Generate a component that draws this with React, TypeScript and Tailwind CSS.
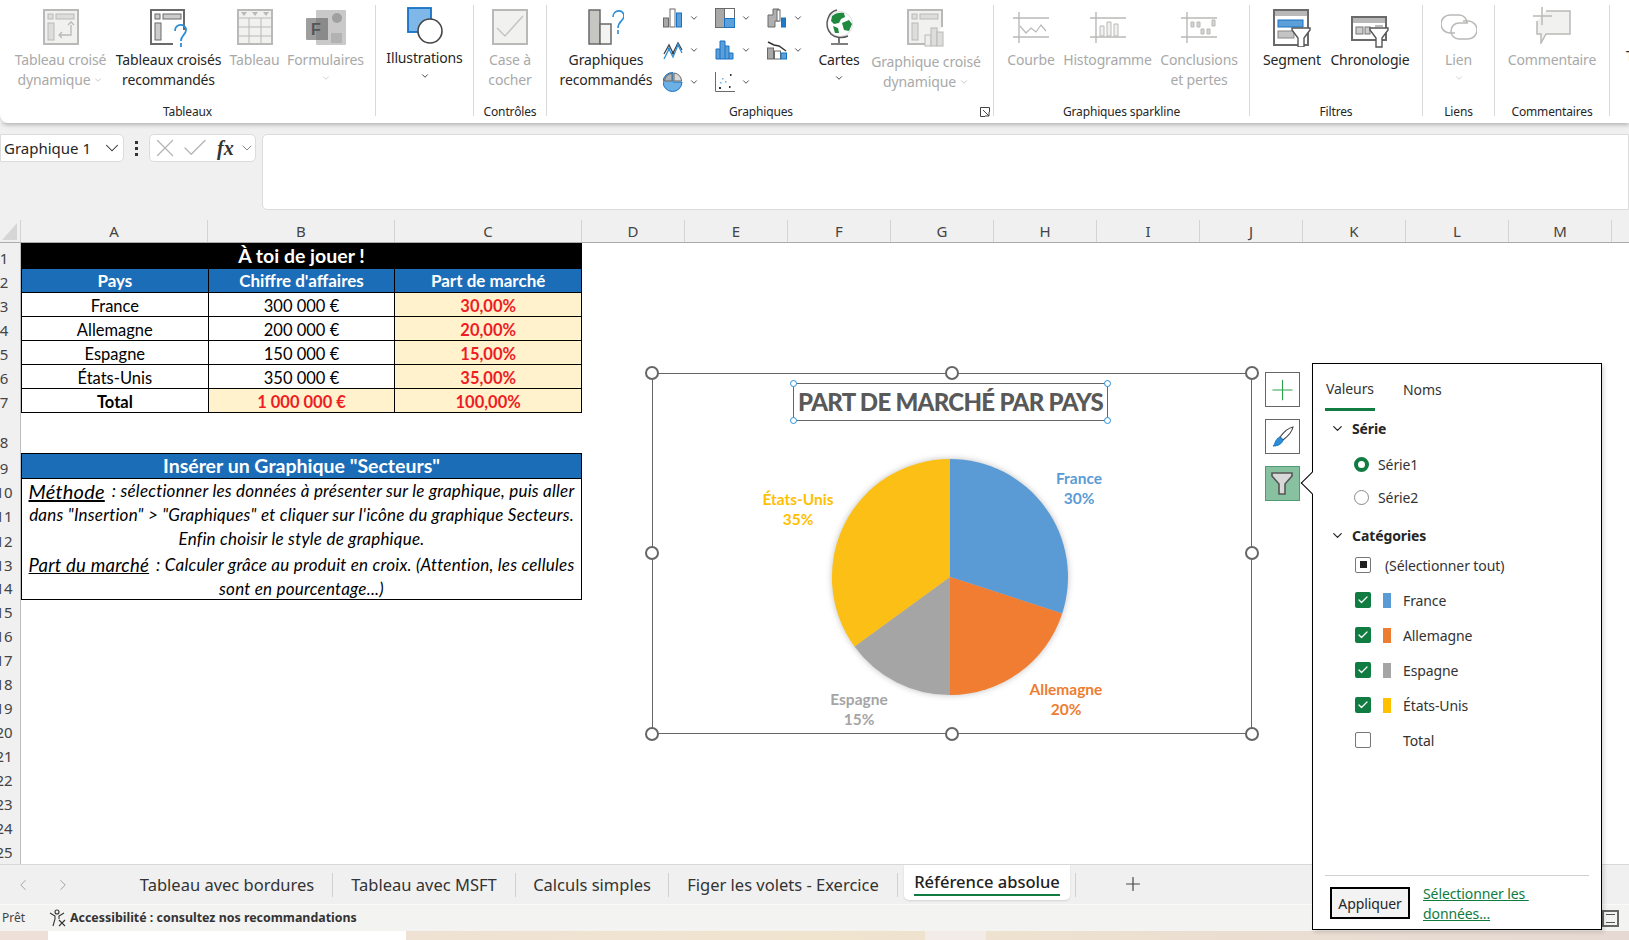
import type { ReactNode } from 'react';
import { Check, ChevronDown, ChevronLeft, ChevronRight, Plus, X } from 'lucide-react';

const ROW_HEIGHTS = [26, 24, 24, 24, 24, 24, 24, 40, 26, 24, 24, 25, 24, 23, 24, 24, 24, 24, 24, 24, 24, 24, 24, 24, 24];
const COLS = ['D', 'E', 'F', 'G', 'H', 'I', 'J', 'K', 'L', 'M'];

const GRAY = '#b9b9b7';
const LIGHT = '#f1f1f0';
const DARK = '#6a6a6a';

function Svg({ w, h, children }: { w: number; h: number; children: ReactNode }) {
  return (
    <svg width={w} height={h} viewBox={`0 0 ${w} ${h}`} fill="none" className="shrink-0">
      {children}
    </svg>
  );
}

function PivotIcon() {
  return (
    <Svg w={36} h={36}>
      <rect x="1" y="1" width="34" height="34" fill={LIGHT} stroke={GRAY} strokeWidth="2" />
      <rect x="5" y="5" width="5" height="5" fill="#ddd" stroke={GRAY} />
      <rect x="13" y="5" width="18" height="5" fill="#ddd" stroke={GRAY} />
      <rect x="5" y="14" width="6" height="17" fill="#ddd" stroke={GRAY} />
      <path d="M28 16v10H16m3-3-3 3 3 3m6-13 3-3 3 3" stroke={GRAY} strokeWidth="1.3" />
    </Svg>
  );
}

function RecoPivotIcon() {
  return (
    <Svg w={38} h={38}>
      <path d="M34 21V1H1v34h22" fill="#fff" stroke={DARK} strokeWidth="2" />
      <rect x="5" y="5" width="5" height="5" fill="#ccc" stroke={DARK} />
      <rect x="13" y="5" width="18" height="5" fill="#ccc" stroke={DARK} />
      <rect x="5" y="14" width="6" height="17" fill="#ccc" stroke={DARK} />
      <path d="M25 22c0-8 11-8 11-1 0 5-5 5-5 11" stroke="#2b8fd8" strokeWidth="1.8" />
      <path d="M31 34v4" stroke="#2b8fd8" strokeWidth="1.8" />
    </Svg>
  );
}

function TableIcon() {
  return (
    <Svg w={36} h={36}>
      <rect x="1" y="1" width="34" height="34" fill={LIGHT} stroke={GRAY} strokeWidth="2" />
      <path d="M1 9h34M1 18h34M1 27h34M12 9v26M24 9v26" stroke={GRAY} />
      <path d="M4 3h6l-3 4zM15 3h6l-3 4zM26 3h6l-3 4z" fill={GRAY} />
    </Svg>
  );
}

function FormsIcon() {
  return (
    <Svg w={40} h={36}>
      <rect x="10" y="1" width="30" height="35" rx="1" fill="#c9c9c9" />
      <circle cx="31" cy="9" r="5" fill="#a0a0a0" />
      <rect x="25" y="24" width="11" height="10" fill="#b2b2b2" />
      <rect x="0" y="9" width="22" height="22" rx="1" fill="#9e9e9e" />
      <rect x="10" y="9" width="12" height="22" fill="#8a8a8a" />
      <text x="5" y="26" fill="#555" fontSize="16" fontWeight="700" fontFamily="Liberation Sans, sans-serif">F</text>
    </Svg>
  );
}

function IllustrationsIcon() {
  return (
    <Svg w={36} h={37}>
      <rect x="1" y="1" width="23" height="24" fill="#7fb7e8" stroke="#1673c5" strokeWidth="1.8" />
      <circle cx="23" cy="24" r="12" fill="#fff" stroke="#444" strokeWidth="1.6" />
    </Svg>
  );
}

function CheckboxIcon() {
  return (
    <Svg w={36} h={36}>
      <rect x="1" y="1" width="34" height="34" fill={LIGHT} stroke={GRAY} strokeWidth="2" />
      <path d="M5 19l8 8L31 7" stroke="#c4c4c4" strokeWidth="1.5" />
    </Svg>
  );
}

function RecoChartIcon() {
  return (
    <Svg w={36} h={36}>
      <rect x="1" y="1" width="11" height="34" fill="#c6c6c2" stroke={DARK} strokeWidth="1.5" />
      <rect x="12" y="15" width="11" height="20" fill="#f3f3f1" stroke={DARK} strokeWidth="1.5" />
      <path d="M25 8c0-8 11-8 11-1 0 5-6 5-6 12" stroke="#2b8fd8" strokeWidth="1.6" />
      <path d="M30 21v4" stroke="#2b8fd8" strokeWidth="1.6" />
    </Svg>
  );
}

function BarsIcon() {
  return (
    <Svg w={20} h={20}>
      <rect x="0.5" y="10" width="5" height="9" fill="#a8a8a8" stroke={DARK} />
      <rect x="7" y="1" width="5" height="18" fill="#fff" stroke={DARK} />
      <rect x="13.5" y="5" width="5" height="14" fill="#5d9fd8" stroke="#1673c5" />
    </Svg>
  );
}

function LinesIcon() {
  return (
    <Svg w={20} h={20}>
      <path d="M1 14l5-9 4 8 5-10 4 7" stroke="#444" strokeWidth="1.3" />
      <path d="M1 19l5-10 4 8 5-12 4 8" stroke="#2b8fd8" strokeWidth="1.3" />
      <circle cx="6" cy="9" r="1.4" fill="#2b8fd8" />
      <circle cx="15" cy="5" r="1.4" fill="#2b8fd8" />
      <circle cx="10" cy="13" r="1.4" fill="#444" />
    </Svg>
  );
}

function PieIcon() {
  return (
    <Svg w={20} h={20}>
      <path d="M10 10h9a9.500 9.500 0 1 1-9-9.500V10z" fill="#6db0e6" stroke="#1673c5" />
      <path d="M9 1.500V9H1.500A7.800 7.800 0 0 1 9 1.500z" fill="#b0b0b0" stroke={DARK} />
      <path d="M11 1a8 8 0 0 1 7.500 8H11z" fill="#d8d8d8" stroke={DARK} />
    </Svg>
  );
}

function TreemapIcon() {
  return (
    <Svg w={20} h={20}>
      <rect x="0.5" y="0.5" width="9" height="19" fill="#a8a8a8" stroke={DARK} />
      <rect x="9.5" y="0.5" width="10" height="10" fill="#fff" stroke={DARK} />
      <rect x="9.5" y="10.5" width="10" height="9" fill="#5d9fd8" stroke="#1673c5" />
    </Svg>
  );
}

function HistoIcon() {
  return (
    <Svg w={20} h={20}>
      <path d="M1 19V9h4V1h5v5h4v7h4v6z" fill="#5d9fd8" stroke="#1673c5" />
      <path d="M5 9v10M10 6v13M14 13v6" stroke="#1673c5" />
    </Svg>
  );
}

function ScatterIcon() {
  return (
    <Svg w={20} h={20}>
      <path d="M0.5 0v19.5H20" stroke={DARK} />
      <path d="M15 2h1.5v2H15zM4 15h2v2H4zM14 14h1.500v2H14z" fill="#333" />
      <path d="M7 6h1.500v1.500H7zM10 9h1.500v1.500H10zM5 10h1.500v1.500H5z" fill="#6db0e6" />
    </Svg>
  );
}

function WaterfallIcon() {
  return (
    <Svg w={20} h={20}>
      <path d="M1 19V7h5V1h6v12h-4v6z" fill="#b0b0b0" stroke={DARK} />
      <rect x="10" y="2" width="3" height="11" fill="#fff" stroke={DARK} />
      <rect x="14.500" y="10" width="4" height="9" fill="#1f78c8" stroke="#1673c5" />
    </Svg>
  );
}

function ComboIcon() {
  return (
    <Svg w={20} h={20}>
      <rect x="0.500" y="8" width="6" height="11" fill="#a8a8a8" stroke={DARK} />
      <rect x="7.500" y="11" width="6" height="8" fill="#fff" stroke={DARK} />
      <rect x="14" y="13" width="5.500" height="6" fill="#5d9fd8" stroke="#1673c5" />
      <path d="M1 2l6 3 5 1 7 5" stroke="#333" strokeWidth="1.400" />
    </Svg>
  );
}

function GlobeIcon() {
  return (
    <Svg w={30} h={37}>
      <circle cx="16" cy="15" r="12.500" fill="#fff" stroke="#ddd" />
      <path d="M8 7c3-3 8-4 12-3l1 4-4 2-2 4-5 1-3-3z" fill="#1f8a3f" />
      <path d="M18 14l7-3 3 4-3 7-5-1z" fill="#1f8a3f" />
      <path d="M9 17l5 2 1 5-4 0z" fill="#1f8a3f" />
      <path d="M13 1C4 3-1 16 7 25c3 3 10 5 17 2" stroke="#555" strokeWidth="1.400" />
      <path d="M15 28v6M7 35h17" stroke="#555" strokeWidth="1.600" />
    </Svg>
  );
}

function PivotChartIcon() {
  return (
    <Svg w={38} h={38}>
      <path d="M22 35H1V1h34v17" fill={LIGHT} stroke={GRAY} strokeWidth="2" />
      <rect x="5" y="5" width="5" height="5" fill="#ddd" stroke={GRAY} />
      <rect x="13" y="5" width="18" height="5" fill="#ddd" stroke={GRAY} />
      <rect x="5" y="14" width="6" height="17" fill="#ddd" stroke={GRAY} />
      <rect x="18" y="26" width="6" height="11" fill="#eee" stroke={GRAY} />
      <rect x="24" y="19" width="6" height="18" fill="#ddd" stroke={GRAY} />
      <rect x="30" y="23" width="6" height="14" fill="#ddd" stroke={GRAY} />
    </Svg>
  );
}

function SparkIcon({ kind }: { kind: 'line' | 'bar' | 'win' }) {
  return (
    <Svg w={36} h={31}>
      <path d="M0 6h36M0 25h36M6 0v31" stroke={GRAY} strokeWidth="1.400" />
      {kind === 'line' && <path d="M7 14l6 7 5-5 5 4 5-7 5 6" stroke={GRAY} strokeWidth="1.200" />}
      {kind === 'bar' && <path d="M10 14h4v10h-4zM17 10h4v14h-4zM24 12h4v12h-4z" fill={LIGHT} stroke={GRAY} />}
      {kind === 'win' && <path d="M10 10h3v5h-3zM16 10h3v5h-3zM20 17h3v5h-3zM26 17h3v5h-3zM31 8h3v6h-3z" fill="#d4d4d4" stroke={GRAY} />}
    </Svg>
  );
}

function FunnelOverlay({ x, y }: { x: number; y: number }) {
  return <path transform={`translate(${x} ${y})`} d="M0 0h18v2l-6 8v9H6v-9L0 2z" fill="#fff" stroke="#555" strokeWidth="1.400" />;
}

function SlicerIcon() {
  return (
    <Svg w={38} h={38}>
      <rect x="1" y="1" width="34" height="35" fill="#fff" stroke={DARK} strokeWidth="2" />
      <rect x="2" y="2" width="32" height="5" fill="#b8b8b8" />
      <rect x="5" y="11" width="25" height="7" fill="#5d9fd8" stroke="#1673c5" />
      <rect x="5" y="22" width="16" height="7" fill="#c4c4c4" stroke="#888" />
      <FunnelOverlay x={19} y={19} />
    </Svg>
  );
}

function TimelineIcon() {
  return (
    <Svg w={38} h={32}>
      <rect x="1" y="1" width="34" height="23" fill="#fff" stroke={DARK} strokeWidth="2" />
      <rect x="2" y="2" width="32" height="5" fill="#b8b8b8" />
      <rect x="5" y="11" width="7" height="7" fill="#ccc" stroke="#777" />
      <rect x="14" y="11" width="5" height="7" fill="#ccc" stroke="#777" />
      <path d="M24 10h8" stroke="#777" />
      <FunnelOverlay x={19} y={12} />
    </Svg>
  );
}

function LinkIcon() {
  return (
    <Svg w={36} h={26}>
      <path d="M14 19H9A8.500 8.500 0 0 1 9 1h9c5 0 8 4 8 8" stroke={GRAY} strokeWidth="1.500" />
      <path d="M22 7h5a9 9 0 0 1 0 18h-9c-5 0-8-4-8-8 0-5 4-8 8-8h9" stroke={GRAY} strokeWidth="1.500" />
    </Svg>
  );
}

function CommentIcon() {
  return (
    <Svg w={38} h={37}>
      <path d="M13 4h24v23H13l-5 9v-9H4V14" fill={LIGHT} stroke={GRAY} strokeWidth="1.500" />
      <path d="M9 0v18M0 9h19" stroke={GRAY} strokeWidth="1.500" />
    </Svg>
  );
}

function FunnelIcon() {
  return (
    <svg width="22" height="23" viewBox="0 0 22 23" fill="none" className="mr-[2px]">
      <path d="M1 1h20v3l-7 8v10H8V12L1 4z" fill="#d8d8d8" stroke="#555" strokeWidth="1.600" />
    </svg>
  );
}

function BrushIcon() {
  return (
    <svg width="22" height="22" viewBox="0 0 22 22" fill="none">
      <path d="M21 1c-1 5-6 10-10 13l-3-3C11 7 16 2 21 1z" fill="#fff" stroke="#444" strokeWidth="1.100" />
      <path d="M8 11l3 3c-1 4-5 6-10 6 3-2 1-6 7-9z" fill="#2b8fd8" stroke="#1673c5" />
    </svg>
  );
}

function AccessibilityIcon() {
  return (
    <svg width="18" height="18" viewBox="0 0 18 18" fill="none" stroke="#333" strokeWidth="1.100">
      <circle cx="8" cy="3" r="2" />
      <path d="M1 4l5 3v3l-2 7M15 4l-5 3v3" />
      <path d="M10 11l6 6M16 11l-6 6" />
    </svg>
  );
}

function RibbonBtn({
  w,
  icon,
  lines,
  disabled,
  chev,
  slot = 'h-[45px] pt-[4px]',
}: {
  w: string;
  icon: ReactNode;
  lines: string[];
  disabled?: boolean;
  chev?: 'inline' | 'below';
  slot?: string;
}) {
  const color = disabled ? 'text-[#a9a9a9]' : 'text-[#262626]';
  return (
    <div className={`${w} flex flex-col items-center shrink-0 ${color}`}>
      <div className={`${slot} flex justify-center items-start`}>{icon}</div>
      {lines.map((line, i) => (
        <div key={line} className="flex items-center justify-center h-[20px] leading-[20px] whitespace-nowrap">
          {line}
          {chev === 'inline' && i === lines.length - 1 && <ChevronDown size={10} strokeWidth={1.500} className="ml-[3px]" />}
        </div>
      ))}
      {chev === 'below' && (
        <div className="h-[16px] flex items-center">
          <ChevronDown size={10} strokeWidth={disabled ? 1.300 : 2} />
        </div>
      )}
    </div>
  );
}

function Group({ w, label, children, className = '' }: { w: string; label?: string; children: ReactNode; className?: string }) {
  return (
    <div className={`${w} shrink-0 h-[111px] mt-[5px] border-r border-[#d9d9d9] flex flex-col`}>
      <div className={`h-[99px] shrink-0 flex ${className}`}>{children}</div>
      <div className="h-[16px] shrink-0 leading-[16px] text-center text-[12px] text-[#262626] whitespace-nowrap">{label}</div>
    </div>
  );
}

function SmallChart({ icon }: { icon: ReactNode }) {
  return (
    <div className="h-[26px] w-[52px] flex items-center pl-[3px] gap-[6px] text-[#333]">
      {icon}
      <ChevronDown size={10} strokeWidth={2} />
    </div>
  );
}

function Ribbon() {
  return (
    <div className="relative z-10 h-[123px] bg-white rounded-bl-lg shadow-[0_2px_4px_rgba(0,0,0,0.25)] flex text-[14px] tracking-[-0.15px] overflow-hidden">
      <Group w="w-[376px]" label="Tableaux" className="pl-[10px]">
        <RibbonBtn w="w-[101px]" icon={<PivotIcon />} lines={['Tableau croisé', 'dynamique']} disabled chev="inline" />
        <RibbonBtn w="w-[115px]" icon={<RecoPivotIcon />} lines={['Tableaux croisés', 'recommandés']} />
        <RibbonBtn w="w-[57px]" icon={<TableIcon />} lines={['Tableau']} disabled />
        <RibbonBtn w="w-[85px]" icon={<FormsIcon />} lines={['Formulaires']} disabled chev="below" />
      </Group>
      <Group w="w-[98px]">
        <RibbonBtn w="w-full" icon={<IllustrationsIcon />} lines={['Illustrations']} chev="below" slot="h-[43px] pt-[2px]" />
      </Group>
      <Group w="w-[73px]" label="Contrôles">
        <RibbonBtn w="w-full" icon={<CheckboxIcon />} lines={['Case à', 'cocher']} disabled />
      </Group>
      <div className="w-[447px] shrink-0 relative">
        <Group w="w-[447px]" className="pl-[13px]">
          <RibbonBtn w="w-[92px]" icon={<RecoChartIcon />} lines={['Graphiques', 'recommandés']} />
          <div className="ml-[8px] w-[156px] shrink-0 grid grid-cols-3 gap-y-[6px] content-start">
            <SmallChart icon={<BarsIcon />} />
            <SmallChart icon={<TreemapIcon />} />
            <SmallChart icon={<WaterfallIcon />} />
            <SmallChart icon={<LinesIcon />} />
            <SmallChart icon={<HistoIcon />} />
            <SmallChart icon={<ComboIcon />} />
            <SmallChart icon={<PieIcon />} />
            <SmallChart icon={<ScatterIcon />} />
          </div>
          <RibbonBtn w="w-[46px]" icon={<GlobeIcon />} lines={['Cartes']} chev="below" />
          <RibbonBtn w="w-[128px]" icon={<PivotChartIcon />} lines={['Graphique croisé', 'dynamique']} disabled chev="inline" slot="h-[47px] pt-[4px]" />
        </Group>
        <div className="absolute left-[182px] top-[103px] text-[12px] text-[#262626]">Graphiques</div>
        <svg className="absolute left-[433px] top-[107px]" width="10" height="10" viewBox="0 0 10 10" fill="none" stroke="#444">
          <path d="M9.500 5V0.500H0.500V9.500H5M3 3l6 6M9 5v4H5" />
        </svg>
      </div>
      <Group w="w-[256px]" label="Graphiques sparkline" className="pl-[7px]">
        <RibbonBtn w="w-[60px]" icon={<SparkIcon kind="line" />} lines={['Courbe']} disabled slot="h-[45px] pt-[7px]" />
        <RibbonBtn w="w-[93px]" icon={<SparkIcon kind="bar" />} lines={['Histogramme']} disabled slot="h-[45px] pt-[7px]" />
        <RibbonBtn w="w-[90px]" icon={<SparkIcon kind="win" />} lines={['Conclusions', 'et pertes']} disabled slot="h-[45px] pt-[7px]" />
      </Group>
      <Group w="w-[173px]" label="Filtres" className="pl-[11px]">
        <RibbonBtn w="w-[62px]" icon={<SlicerIcon />} lines={['Segment']} />
        <RibbonBtn w="w-[94px]" icon={<TimelineIcon />} lines={['Chronologie']} slot="h-[45px] pt-[11px]" />
      </Group>
      <Group w="w-[72px]" label="Liens">
        <RibbonBtn w="w-full" icon={<LinkIcon />} lines={['Lien']} disabled chev="below" slot="h-[45px] pt-[9px]" />
      </Group>
      <Group w="w-[115px]" label="Commentaires">
        <RibbonBtn w="w-full" icon={<CommentIcon />} lines={['Commentaire']} disabled slot="h-[45px] pt-[2px]" />
      </Group>
      <div className="pl-[16px] pt-[45px] text-[#262626]">T</div>
    </div>
  );
}

function FormulaBar() {
  return (
    <div className="h-[97px] bg-[#f0f0f0] flex items-start pt-[11px] font-['Noto_Sans',sans-serif]">
      <div className="w-[124px] h-[28px] bg-white border border-[#dcdcdc] rounded-r-[5px] flex items-center justify-between pl-[3px] text-[15px] text-[#262626]">
        Graphique 1
        <ChevronDown size={22} strokeWidth={1.100} />
      </div>
      <div className="w-[25px] h-[28px] flex flex-col items-center justify-center gap-[3px]">
        <span className="w-[3px] h-[3px] bg-[#333]" />
        <span className="w-[3px] h-[3px] bg-[#333]" />
        <span className="w-[3px] h-[3px] bg-[#333]" />
      </div>
      <div className="w-[107px] h-[28px] bg-white border border-[#dcdcdc] rounded-[5px] flex items-center text-[#b4b4b4]">
        <X size={30} strokeWidth={1} />
        <Check size={30} strokeWidth={1} />
        <span className="ml-[7px] mr-[5px] font-['Liberation_Serif',serif] italic font-bold text-[20px] text-[#333]">fx</span>
        <ChevronDown size={16} strokeWidth={1.300} className="text-[#777]" />
      </div>
      <div className="ml-[6px] flex-1 h-[76px] bg-white border border-[#dcdcdc] rounded-l-[5px]" />
    </div>
  );
}

function ColumnHeaders() {
  return (
    <div className="h-[23px] flex bg-[#f0f0f0] border-b border-[#ababab] text-[15px] text-[#444] font-['Noto_Sans',sans-serif]">
      <div className="w-[21px] shrink-0 border-r border-[#d4d4d4] pl-[2px] pt-[3px]">
        <svg width="15" height="17" viewBox="0 0 15 17"><path d="M15 0v17H0z" fill="#d6d6d6" /></svg>
      </div>
      {['A', 'B', 'C'].map((c) => (
        <div key={c} className="w-[187px] shrink-0 border-r border-[#d4d4d4] flex items-center justify-center">{c}</div>
      ))}
      {COLS.map((c) => (
        <div key={c} className="w-[103px] shrink-0 border-r border-[#d4d4d4] flex items-center justify-center">{c}</div>
      ))}
    </div>
  );
}

function RowHeaders() {
  return (
    <div className="w-[21px] shrink-0 bg-[#f0f0f0] border-r border-[#bdbdbd] overflow-hidden text-[15px] leading-[22px] text-[#444] font-['Noto_Sans',sans-serif]">
      {ROW_HEIGHTS.map((h, i) => (
        <div key={i} style={{ height: h }} className="w-[8px] flex items-end justify-center whitespace-nowrap">
          {i + 1}
        </div>
      ))}
    </div>
  );
}

const DATA = [
  ['France', '300 000 €', '30,00%'],
  ['Allemagne', '200 000 €', '20,00%'],
  ['Espagne', '150 000 €', '15,00%'],
  ['États-Unis', '350 000 €', '35,00%'],
];

function Cells() {
  const cell = 'flex items-center justify-center border-r border-b border-black';
  const row = 'grid grid-cols-3 grid-rows-[24px] h-[24px] border-l border-black';
  const cream = 'bg-[#fff2cc] text-[#ee1c25] font-bold pt-[2px]';
  return (
    <div className="w-[561px] shrink-0 text-[16.5px] leading-[20px] text-black font-['Lato',sans-serif]">
      <div className="h-[26px] bg-black text-white font-bold text-[19.5px] flex items-center justify-center">À toi de jouer !</div>
      <div className={`${row} bg-[#1c6db8] text-white font-bold text-[17px]`}>
        <div className={cell}>Pays</div>
        <div className={cell}>Chiffre d'affaires</div>
        <div className={cell}>Part de marché</div>
      </div>
      {DATA.map((d) => (
        <div key={d[0]} className={row}>
          <div className={`${cell} pt-[2px]`}>{d[0]}</div>
          <div className={`${cell} pt-[2px]`}>{d[1]}</div>
          <div className={`${cell} ${cream}`}>{d[2]}</div>
        </div>
      ))}
      <div className={row}>
        <div className={`${cell} font-bold pt-[2px]`}>Total</div>
        <div className={`${cell} ${cream}`}>1 000 000 €</div>
        <div className={`${cell} ${cream}`}>100,00%</div>
      </div>
      <div className="h-[40px]" />
      <div className="border border-black">
        <div className="h-[25px] bg-[#1c6db8] text-white font-bold text-[19.5px] flex items-center justify-center border-b border-black">Insérer un Graphique "Secteurs"</div>
        <div className="italic whitespace-nowrap text-[17px] tracking-[0.23px]">
          <div className="h-[24px] flex items-center justify-center">
            <span className="text-[20px] underline mr-[7px]">Méthode</span>: sélectionner les données à présenter sur le graphique, puis aller
          </div>
          <div className="h-[24px] flex items-center justify-center">dans "Insertion" &gt; "Graphiques" et cliquer sur l'icône du graphique Secteurs.</div>
          <div className="h-[24px] flex items-center justify-center">Enfin choisir le style de graphique.</div>
          <div className="h-[25px] flex items-center justify-center pt-[2px]">
            <span className="text-[18.5px] underline mr-[7px]">Part du marché</span>: Calculer grâce au produit en croix. (Attention, les cellules
          </div>
          <div className="h-[23px] flex items-center justify-center pt-[2px]">sont en pourcentage...)</div>
        </div>
      </div>
    </div>
  );
}

const HANDLES = [
  'left-[-8px] top-[-8px]',
  'left-[292px] top-[-8px]',
  'right-[-8px] top-[-8px]',
  'left-[-8px] top-[172px]',
  'right-[-8px] top-[172px]',
  'left-[-8px] bottom-[-8px]',
  'left-[292px] bottom-[-8px]',
  'right-[-8px] bottom-[-8px]',
];

const TITLE_HANDLES = ['left-[-4px] top-[-4px]', 'right-[-4px] top-[-4px]', 'left-[-4px] bottom-[-4px]', 'right-[-4px] bottom-[-4px]'];

const LABELS = [
  { name: 'France', pct: '30%', pos: 'left-[387px] top-[94px]', color: 'text-[#5b9bd5]' },
  { name: 'États-Unis', pct: '35%', pos: 'left-[106px] top-[115px]', color: 'text-[#ffc000]' },
  { name: 'Espagne', pct: '15%', pos: 'left-[167px] top-[315px]', color: 'text-[#a5a5a5]' },
  { name: 'Allemagne', pct: '20%', pos: 'left-[374px] top-[305px]', color: 'text-[#ed7d31]' },
];

function Chart() {
  return (
    <div className="absolute left-[652px] top-[373px] w-[600px] h-[361px] border border-[#666] bg-white font-['Lato',sans-serif]">
      <div className="absolute left-[140px] top-[9px] w-[315px] h-[38px] border border-[#666] flex items-center justify-center text-[24px] font-black text-[#595959] whitespace-nowrap tracking-[-0.7px]">
        PART DE MARCHÉ PAR PAYS
        {TITLE_HANDLES.map((p) => (
          <span key={p} className={`absolute ${p} w-[7px] h-[7px] rounded-full bg-white border border-[#2b8fd8]`} />
        ))}
      </div>
      <svg className="absolute left-[167px] top-[73px] drop-shadow-[0_0_3px_rgba(0,0,0,0.25)]" width="260" height="260" viewBox="0 0 260 260">
        <path d="M130 130V12A118 118 0 0 1 242.200 166.500z" fill="#5b9bd5" />
        <path d="M130 130L242.200 166.500A118 118 0 0 1 130 248z" fill="#f07d31" />
        <path d="M130 130V248A118 118 0 0 1 34.500 199.400z" fill="#a5a5a5" />
        <path d="M130 130L34.500 199.400A118 118 0 0 1 130 12z" fill="#fcbf16" />
      </svg>
      {LABELS.map((l) => (
        <div key={l.name} className={`absolute ${l.pos} ${l.color} w-[78px] text-center text-[15.5px] font-bold leading-[20px]`}>
          <div>{l.name}</div>
          <div>{l.pct}</div>
        </div>
      ))}
      {HANDLES.map((p) => (
        <span key={p} className={`absolute ${p} w-[14px] h-[14px] rounded-full bg-white border-2 border-[#666]`} />
      ))}
    </div>
  );
}

function SideButtons() {
  const btn = 'w-[35px] h-[35px] border border-[#666] bg-white flex items-center justify-center';
  return (
    <div className="absolute left-[1265px] top-[372px] flex flex-col gap-[12px]">
      <div className={btn}><Plus size={34} strokeWidth={0.800} className="text-[#2ca24f]" /></div>
      <div className={btn}><BrushIcon /></div>
      <div className="w-[35px] h-[35px] border border-[#4f9a70] bg-[#88c1a0] flex items-center justify-center"><FunnelIcon /></div>
    </div>
  );
}

const CATEGORIES = [
  { name: 'France', swatch: 'bg-[#5b9bd5]', on: true },
  { name: 'Allemagne', swatch: 'bg-[#ed7d31]', on: true },
  { name: 'Espagne', swatch: 'bg-[#a5a5a5]', on: true },
  { name: 'États-Unis', swatch: 'bg-[#ffc000]', on: true },
  { name: 'Total', swatch: '', on: false },
];

function SectionTitle({ label, className }: { label: string; className: string }) {
  return (
    <div className={`flex items-center ${className} pl-[17px] font-bold text-[#262626]`}>
      <ChevronDown size={15} strokeWidth={2} />
      <span className="ml-[7px]">{label}</span>
    </div>
  );
}

function FilterPanel() {
  return (
    <div className="absolute left-[1312px] top-[363px] w-[290px] h-[567px] bg-white border border-black flex flex-col text-[14px] tracking-[-0.1px] text-[#333] font-['Noto_Sans',sans-serif] shadow-[2px_2px_4px_rgba(0,0,0,0.15)]">
      <span className="absolute left-[-9px] top-[111px] w-[16px] h-[16px] rotate-45 bg-white border-l border-b border-black" />
      <div className="relative flex h-[47px] pl-[12px]">
        <div className="w-[50px] border-b-[3px] border-[#107c41] flex items-center justify-center pt-[5px]">Valeurs</div>
        <div className="ml-[28px] flex items-center pt-[3px]">Noms</div>
      </div>
      <SectionTitle label="Série" className="h-[35px]" />
      <div className="h-[37px] flex items-center pl-[41px]">
        <span className="w-[15px] h-[15px] rounded-full border-[4px] border-[#107c41]" />
        <span className="ml-[9px]">Série1</span>
      </div>
      <div className="h-[28px] flex items-center pl-[41px]">
        <span className="w-[15px] h-[15px] rounded-full border border-[#8a8a8a]" />
        <span className="ml-[9px]">Série2</span>
      </div>
      <SectionTitle label="Catégories" className="h-[37px] pt-[11px]" />
      <div className="h-[35px] flex items-center pl-[42px]">
        <span className="w-[16px] h-[16px] -mt-[2px] rounded-[2px] border border-[#777] flex items-center justify-center">
          <span className="w-[7px] h-[7px] bg-[#222]" />
        </span>
        <span className="ml-[14px]">(Sélectionner tout)</span>
      </div>
      {CATEGORIES.map((c) => (
        <div key={c.name} className="h-[35px] flex items-center pl-[42px]">
          {c.on ? (
            <span className="w-[16px] h-[16px] -mt-[2px] rounded-[2px] bg-[#107c41] flex items-center justify-center">
              <Check size={12} strokeWidth={2.500} className="text-white" />
            </span>
          ) : (
            <span className="w-[16px] h-[16px] -mt-[2px] rounded-[2px] border border-[#777]" />
          )}
          <span className={`ml-[12px] w-[8px] h-[15px] ${c.swatch}`} />
          <span className="ml-[12px]">{c.name}</span>
        </div>
      ))}
      <div className="mt-auto mx-[12px] h-[54px] border-t border-[#d0d0d0] flex pt-[11px]">
        <div className="ml-[5px] w-[80px] h-[32px] border-2 border-black bg-[#f3f3f3] text-[#262626] flex items-center justify-center">Appliquer</div>
        <div className="ml-[13px] leading-[20px] text-[#107c41] underline -mt-[3px]">Sélectionner les&nbsp;<br />données...</div>
      </div>
    </div>
  );
}

function SheetTabs() {
  const sep = <span className="w-px h-[24px] mt-[8px] mx-[18px] bg-[#d0d0d0] shrink-0" />;
  const tab = 'h-[38px] flex items-center justify-center whitespace-nowrap pt-[2px] shrink-0';
  return (
    <div className="h-[40px] bg-[#f0f0f0] border-t border-[#d8d8d8] flex text-[16.5px] text-[#333] font-['Noto_Sans',sans-serif]">
      <div className="w-[140px] shrink-0 flex items-center pl-[14px] gap-[22px] text-[#9a9a9a]">
        <ChevronLeft size={18} strokeWidth={1.200} />
        <ChevronRight size={18} strokeWidth={1.200} />
      </div>
      <div className={`w-[174px] ${tab}`}>Tableau avec bordures</div>
      {sep}
      <div className={`w-[146px] ${tab}`}>Tableau avec MSFT</div>
      {sep}
      <div className={`w-[116px] ${tab}`}>Calculs simples</div>
      {sep}
      <div className={`w-[192px] ${tab}`}>Figer les volets - Exercice</div>
      <span className="w-px h-[24px] mt-[8px] ml-[18px] mr-[6px] bg-[#d0d0d0] shrink-0" />
      <div className="w-[166px] h-[35px] bg-white rounded-b-[5px] shrink-0 flex flex-col items-center shadow-[0_1px_2px_rgba(0,0,0,0.12)]">
        <span className="mt-[5px] h-[24px] leading-[24px] font-medium text-[#222] whitespace-nowrap">Référence absolue</span>
        <span className="w-[146px] h-[2px] bg-[#107c41]" />
      </div>
      <span className="w-px h-[24px] mt-[8px] ml-[5px] bg-[#d0d0d0] shrink-0" />
      <div className="ml-[46px] h-[38px] flex items-center text-[#444]"><Plus size={22} strokeWidth={1.300} /></div>
    </div>
  );
}

function StatusBar() {
  return (
    <div className="h-[27px] bg-[#f3f3f2] border-t border-[#fafafa] flex items-center text-[12px] text-[#444] font-['Noto_Sans',sans-serif]">
      <span className="ml-[2px] w-[47px]">Prêt</span>
      <AccessibilityIcon />
      <span className="ml-[3px] font-bold text-[12.4px] text-[#333]">Accessibilité : consultez nos recommandations</span>
      <div className="ml-auto mr-[10px] w-[17px] h-[17px] border-2 border-[#666] flex items-center justify-center">
        <span className="w-[9px] h-[9px] border-y border-[#555]" />
      </div>
    </div>
  );
}

function BottomStrip() {
  return (
    <div className="h-[9px] flex bg-gradient-to-r from-[#eedfd8] via-[#f0e4cf] to-[#e6d9d3]">
      <div className="ml-[48px] w-[358px] bg-white" />
      <div className="ml-[519px] w-[61px] bg-[#f2ebe8]" />
    </div>
  );
}

export default function App() {
  return (
    <div className="relative w-[1629px] h-[940px] overflow-hidden bg-white font-['Noto_Sans',sans-serif]">
      <Ribbon />
      <FormulaBar />
      <ColumnHeaders />
      <div className="h-[621px] flex overflow-hidden">
        <RowHeaders />
        <Cells />
      </div>
      <SheetTabs />
      <StatusBar />
      <BottomStrip />
      <Chart />
      <SideButtons />
      <FilterPanel />
    </div>
  );
}
